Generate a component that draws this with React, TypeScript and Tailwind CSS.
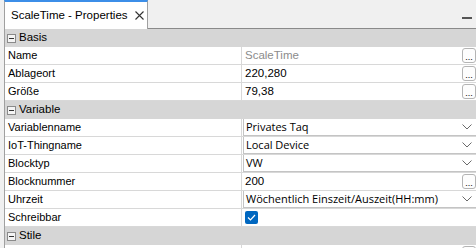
import React from "react";

const font = { fontFamily: '"Liberation Sans", Arial, sans-serif' };

function Minus() {
  return (
    <span className="relative mr-[2px] ml-[2px] inline-block h-[9px] w-[9px] border border-[#8a8a8a] bg-[#f4f4f4]">
      <span className="absolute left-[1px] top-[3px] h-[1px] w-[5px] bg-[#333]" />
    </span>
  );
}

function Header({ title }: { title: string }) {
  return (
    <div className="flex h-[18px] items-center bg-[#d6d6d6] text-[11.5px] text-black">
      <Minus />
      <span className="ml-[1px]">{title}</span>
    </div>
  );
}

function Dots() {
  return (
    <div className="flex h-[15px] w-[14px] shrink-0 items-end justify-center rounded-[3px] border border-[#b4b4b4] bg-[#fdfdfd] pb-[1px] text-[9px] leading-[8px] text-black">
      ...
    </div>
  );
}

function Chevron() {
  return (
    <svg width="10" height="6" viewBox="0 0 10 6" className="mr-[4px] shrink-0">
      <polyline points="0.5,0.5 5,5 9.5,0.5" fill="none" stroke="#6a6a6a" strokeWidth="1" />
    </svg>
  );
}

type Kind = "text" | "dots" | "drop" | "check" | "gray";

function Row({ label, value, kind }: { label: string; value?: string; kind: Kind }) {
  return (
    <div className="flex h-[18px] border-b border-[#d8d8d8] bg-white text-[11.5px]">
      <div className="flex w-[237px] shrink-0 items-center border-r border-[#d8d8d8] pl-[3px] text-[11px] text-black">
        {label}
      </div>
      {kind === "drop" ? (
        <div className="ml-[1px] flex flex-1 items-center border-b border-l border-[#c4c4c4] pl-[2px] text-black">
          <span className="flex-1" style={{ fontFamily: '"Open Sans", "Liberation Sans", sans-serif', fontSize: "11px" }}>
            {value}
          </span>
          <Chevron />
        </div>
      ) : kind === "check" ? (
        <div className="flex flex-1 items-center pl-[3px]">
          <span className="flex h-[13px] w-[13px] items-center justify-center rounded-[2px] bg-[#0067c0]">
            <svg width="9" height="7" viewBox="0 0 9 7">
              <polyline points="1,3.5 3.5,6 8,1" fill="none" stroke="white" strokeWidth="1.2" />
            </svg>
          </span>
        </div>
      ) : (
        <div className="flex flex-1 items-center pl-[3px]">
          <span className={"flex-1 " + (kind === "gray" ? "text-[#8c8c8c]" : "text-black")}>{value}</span>
          {(kind === "dots" || kind === "gray") && <Dots />}
        </div>
      )}
    </div>
  );
}

export default function App() {
  return (
    <div className="relative h-[248px] w-[476px] overflow-hidden bg-[#f0f0f0]" style={font}>
      <div className="flex h-[29px] items-end">
        <div className="ml-[4px] flex h-[29px] w-[144px] items-center border-l border-r border-t-2 border-[#a0a0a0] border-t-[#3c8ee8] bg-white pl-[6px] text-[11.5px] text-black">
          <span>ScaleTime - Properties</span>
          <svg width="9" height="9" viewBox="0 0 9 9" className="ml-[7px]">
            <path d="M0.5 0.5 L8.5 8.5 M8.5 0.5 L0.5 8.5" stroke="#333" strokeWidth="1.1" />
          </svg>
        </div>
        <div className="flex h-[29px] flex-1 flex-col justify-end">
          <div className="mb-[9px] ml-auto mr-[4px] h-[2px] w-[10px] bg-[#555]" />
          <div className="h-[1px] bg-[#8a8a8a]" />
        </div>
      </div>
      <div className="ml-[4px] border-l border-[#a0a0a0] bg-white">
        <Header title="Basis" />
        <Row label="Name" value="ScaleTime" kind="gray" />
        <Row label="Ablageort" value="220,280" kind="dots" />
        <Row label="Größe" value="79,38" kind="dots" />
        <Header title="Variable" />
        <Row label="Variablenname" value="Privates Taq" kind="drop" />
        <Row label="IoT-Thingname" value="Local Device" kind="drop" />
        <Row label="Blocktyp" value="VW" kind="drop" />
        <Row label="Blocknummer" value="200" kind="dots" />
        <Row label="Uhrzeit" value="Wöchentlich Einszeit/Auszeit(HH:mm)" kind="drop" />
        <Row label="Schreibbar" kind="check" />
        <Header title="Stile" />
        <Row label="" value="Anzeigen Nummer" kind="dots" />
      </div>
    </div>
  );
}
